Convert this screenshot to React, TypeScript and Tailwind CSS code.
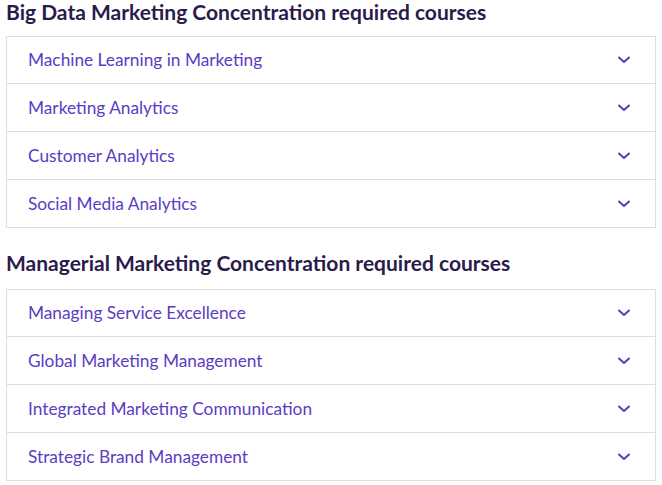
const groups = [
  {
    title: "Big Data Marketing Concentration required courses",
    courses: [
      "Machine Learning in Marketing",
      "Marketing Analytics",
      "Customer Analytics",
      "Social Media Analytics",
    ],
  },
  {
    title: "Managerial Marketing Concentration required courses",
    courses: [
      "Managing Service Excellence",
      "Global Marketing Management",
      "Integrated Marketing Communication",
      "Strategic Brand Management",
    ],
  },
];

function Chevron() {
  return (
    <svg className="w-[12px] h-[8px]" viewBox="0 0 12 8" fill="none">
      <path
        d="M1 1.5L6 6L11 1.5"
        stroke="#5b3cc4"
        strokeWidth="2"
        strokeLinecap="round"
        strokeLinejoin="round"
      />
    </svg>
  );
}

export default function App() {
  return (
    <div className="w-[662px] h-[485px] bg-white px-[6px] font-['Lato',sans-serif] overflow-hidden">
      {groups.map((g, gi) => (
        <section key={g.title} className={gi === 0 ? "" : "mt-[23px]"}>
          <h2
            className={`text-[21px] leading-[24px] font-bold text-[#2b1b4d] ${
              gi === 0 ? "mb-[12px]" : "mb-[14px]"
            }`}
          >
            {g.title}
          </h2>
          <ul className="border border-[#dddde2]">
            {g.courses.map((c, i) => (
              <li
                key={c}
                className={`flex items-center justify-between pl-[21px] pr-[25px] ${
                  i > 0 ? "h-[48px] border-t border-[#dddde2]" : "h-[46px]"
                }`}
              >
                <span className="text-[17.3px] text-[#5b3cc4]">{c}</span>
                <Chevron />
              </li>
            ))}
          </ul>
        </section>
      ))}
    </div>
  );
}
